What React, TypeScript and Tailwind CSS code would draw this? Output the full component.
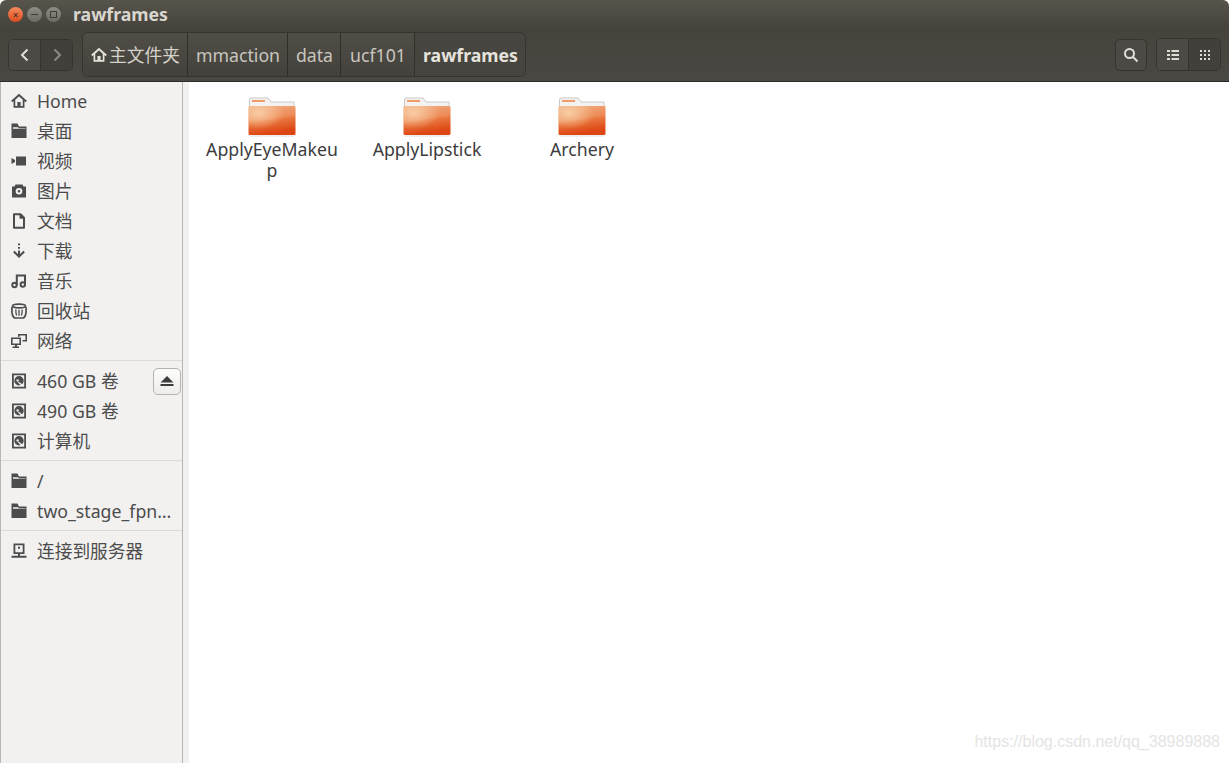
import React from "react";

const uiFont = "[font-family:'Noto_Sans','Noto_Sans_CJK_SC',sans-serif]";

const Svg = ({ children }: { children: React.ReactNode }) => (
  <svg width="16" height="16" viewBox="0 0 16 16" fill="#4c4c4c">
    {children}
  </svg>
);

const HomeIcon = ({ color = "#4c4c4c" }: { color?: string }) => (
  <svg width="16" height="16" viewBox="0 0 16 16" fill="none" stroke={color}>
    <path d="M0.8 8.6 L8 2 L15.2 8.6" strokeWidth="2" />
    <path d="M3.4 7 V13.8 H12.6 V7" strokeWidth="1.7" />
    <path d="M6.4 9 H9.6 V14 H6.4 Z" fill={color} stroke="none" />
  </svg>
);
const FolderIcon = () => (
  <Svg>
    <path d="M0.5 0.5 H6.5 L8 3.5 H15.5 V15 H0.5 Z" />
    <path d="M2 4.2 H7 L8 5.2 H14.5 V5.8 H2 Z" fill="#f2f1f0" />
  </Svg>
);
const VideoIcon = () => (
  <Svg>
    <path d="M5 3.5 H15 V12.5 H5 Z M0.5 5 L4 7 V9 L0.5 11 Z" />
  </Svg>
);
const CameraIcon = () => (
  <Svg>
    <path fillRule="evenodd" d="M4.5 1.5 H11.5 L12.5 3.5 H15 V14.5 H1 V3.5 H3.5 Z M8 5 A3.3 3.3 0 1 0 8 11.6 A3.3 3.3 0 1 0 8 5 Z M8 7 A1.3 1.3 0 1 1 8 9.6 A1.3 1.3 0 1 1 8 7 Z" />
  </Svg>
);
const DocIcon = () => (
  <svg width="16" height="16" viewBox="0 0 16 16" fill="none" stroke="#4c4c4c" strokeWidth="2">
    <path d="M3 1.2 H9.5 L13 4.8 V14.8 H3 Z M9.5 1.2 V4.8 H13" strokeLinejoin="round" />
  </svg>
);
const DownloadIcon = () => (
  <svg width="16" height="16" viewBox="0 0 16 16" fill="none" stroke="#4c4c4c" strokeWidth="2">
    <path d="M8 0.5 V2.2 M8 4 V5.7 M8 7.5 V13 M2.8 8.5 L8 13.5 L13.2 8.5" />
  </svg>
);
const MusicIcon = () => (
  <svg width="16" height="16" viewBox="0 0 16 16" fill="none" stroke="#4c4c4c" strokeWidth="2">
    <path d="M5.8 12 V2.5 H14 V11" />
    <circle cx="3.5" cy="12" r="2.2" />
    <circle cx="11.8" cy="11.5" r="2.2" />
  </svg>
);
const TrashIcon = () => (
  <svg width="16" height="16" viewBox="0 0 16 16" fill="none" stroke="#4c4c4c" strokeWidth="1.3">
    <ellipse cx="8" cy="3" rx="6.5" ry="1.9" strokeWidth="1.7" />
    <path d="M1 4 C0.5 10 1.5 15 4.5 15 H11.5 C14.5 15 15.5 10 15 4" strokeWidth="1.7" />
    <path d="M4.8 6.5 C4.8 9 5 11 5.6 12.6 M8 6.8 V12.8 M11.2 6.5 C11.2 9 11 11 10.4 12.6" />
  </svg>
);
const NetworkIcon = () => (
  <Svg>
    <path fillRule="evenodd" d="M0 4.5 H10 V12 H6 V13.5 H8 V15 H1.5 V13.5 H4 V12 H0 Z M1.6 6 V10.5 H8.4 V6 Z" />
    <path d="M7 1 H16 V8.5 H11.5 V7 H14.4 V2.5 H8.6 V3.8 H7 Z" />
  </Svg>
);
const DiskIcon = () => (
  <Svg>
    <path fillRule="evenodd" d="M1 0.5 H15 V15.5 H1 Z M2.8 2.2 V13.8 H13.2 V2.2 Z" />
    <path fillRule="evenodd" d="M8 3 A4.7 4.7 0 1 0 8 12.4 A4.7 4.7 0 1 0 8 3 Z M6.6 6.2 A1.2 1.2 0 1 1 6.6 8.6 A1.2 1.2 0 1 1 6.6 6.2 Z" />
    <path d="M7.5 8.5 L11.5 11.6 L10.4 12.8 L6.8 9.2 Z" fill="#f2f1f0" />
  </Svg>
);
const ServerIcon = () => (
  <Svg>
    <path fillRule="evenodd" d="M2.5 0.5 H13.5 V11 H9 V12.8 H15.5 V14.8 H0.5 V12.8 H7 V11 H2.5 Z M4.3 2.2 V9.3 H11.7 V2.2 Z" />
    <path d="M7 3.8 H9 V5.8 H7 Z" />
  </Svg>
);

const SidebarRow = ({ icon, label, eject }: { icon: React.ReactNode; label: string; eject?: boolean }) => (
  <div className="flex h-[30px] items-center">
    <div className="flex w-[36px] shrink-0 justify-center">{icon}</div>
    <span className="flex-1 whitespace-nowrap text-[17.7px] text-[#4c4c4c]">{label}</span>
    {eject && (
      <div className="mr-[1px] flex h-[27px] w-[28px] items-center justify-center rounded-[5px] border border-[#b5b2ac] bg-gradient-to-b from-[#fbfbfa] to-[#efeeec]">
        <svg width="16" height="16" viewBox="0 0 16 16" fill="#3c3c3c">
          <path d="M8 3 L14.5 9.5 H1.5 Z M1.5 11 H14.5 V13 H1.5 Z" />
        </svg>
      </div>
    )}
  </div>
);

const Separator = () => <div className="mb-[5px] mt-[4px] h-[1px] bg-[#dcdad7]" />;

const Crumb = ({ children, active, last }: { children: React.ReactNode; active?: boolean; last?: boolean }) => (
  <div
    className={`flex h-full items-center justify-center whitespace-nowrap pl-[1px] pt-[1px] text-[17.7px] ${last ? "" : "border-r border-[#2f2e29]"} ${
      active ? "bg-[#47453f] font-bold text-[#e6e3dd]" : "bg-gradient-to-b from-[#4f4d46] to-[#44423c] text-[#c9c6bf]"
    }`}
  >
    {children}
  </div>
);

const FolderTile = ({ name }: { name: string }) => (
  <div className="flex w-[155px] flex-col items-center pl-[3px]">
    <svg width="48" height="40" viewBox="0 0 48 40">
      <defs>
        <linearGradient id="body" x1="0" y1="0" x2="0.25" y2="1">
          <stop offset="0" stopColor="#f0a878" />
          <stop offset="0.5" stopColor="#ec824a" />
          <stop offset="1" stopColor="#dd4512" />
        </linearGradient>
        <radialGradient id="glow" cx="0.22" cy="0.25" r="0.55">
          <stop offset="0" stopColor="#fbd6ac" stopOpacity="0.8" />
          <stop offset="1" stopColor="#fbd6ac" stopOpacity="0" />
        </radialGradient>
      </defs>
      <path d="M1.5 10 V3 Q1.5 1 3 1 H20 L23 5 H46 V10 Z" fill="#f3f2f0" stroke="#cbc9c5" strokeWidth="1" />
      <path d="M4 3 H17 V5 H4 Z" fill="#ef9a68" />
      <path d="M0.5 10 Q0.5 9 2 9 H46 Q47.5 9 47.5 10 V37 Q47.5 38 46 38 H2 Q0.5 38 0.5 37 Z" fill="url(#body)" />
      <path d="M0.5 10 Q0.5 9 2 9 H46 Q47.5 9 47.5 10 V37 Q47.5 38 46 38 H2 Q0.5 38 0.5 37 Z" fill="url(#glow)" />
      <path d="M0.5 27 Q22 22 47.5 19 V10 Q47.5 9 46 9 H2 Q0.5 9 0.5 10 Z" fill="#ffffff" opacity="0.08" />
      <path d="M2 39 H46" stroke="#dddddd" strokeWidth="1" />
    </svg>
    <span className="mt-[2px] w-[135px] break-all text-center text-[17.7px] leading-[21px] text-[#3c3c3c]">{name}</span>
  </div>
);

export default function App() {
  return (
    <div className={`flex h-[763px] w-[1229px] flex-col overflow-hidden bg-white ${uiFont}`}>
      {/* title bar */}
      <div className="flex h-[28px] shrink-0 items-center rounded-t-[6px] bg-gradient-to-b from-[#57544b] to-[#45433c] pl-[8px] pt-[1px]">
        <div className="flex items-center gap-[4px]">
          <div className="flex h-[15px] w-[15px] items-center justify-center rounded-full bg-gradient-to-b from-[#f58a5c] to-[#dc4a1c] text-[10px] leading-none text-[#40291f]">×</div>
          <div className="flex h-[15px] w-[15px] items-center justify-center rounded-full bg-gradient-to-b from-[#8f8c84] to-[#6c6a63]">
            <div className="h-[1px] w-[7px] bg-[#3d3b35]" />
          </div>
          <div className="flex h-[15px] w-[15px] items-center justify-center rounded-full bg-gradient-to-b from-[#8f8c84] to-[#6c6a63]">
            <div className="h-[7px] w-[7px] border border-[#3d3b35]" />
          </div>
        </div>
        <span className="ml-[12px] text-[17.7px] font-bold text-[#d9d6cf]">rawframes</span>
      </div>

      {/* toolbar */}
      <div className="flex h-[54px] shrink-0 items-center border-b border-[#2b2a26] bg-gradient-to-b from-[#45433c] to-[#4a4842] pl-[8px] pr-[8px]">
        <div className="flex h-[32px] w-[65px] overflow-hidden rounded-[5px] border border-[#35342f]">
          <div className="flex flex-1 items-center justify-center border-r border-[#35342f] bg-[#4c4a44]">
            <svg width="16" height="16" viewBox="0 0 16 16" fill="none" stroke="#e2dfd9" strokeWidth="2"><path d="M10.5 2.5 L5 8 L10.5 13.5" /></svg>
          </div>
          <div className="flex flex-1 items-center justify-center bg-[#42403a]">
            <svg width="16" height="16" viewBox="0 0 16 16" fill="none" stroke="#8d8a83" strokeWidth="2"><path d="M5.5 2.5 L11 8 L5.5 13.5" /></svg>
          </div>
        </div>

        <div className="ml-[9px] grid h-[45px] w-[444px] grid-cols-[105px_100px_53px_74px_110px] overflow-hidden rounded-[6px] border border-[#35342f]">
          <Crumb>
            <HomeIcon color="#e6e3dd" />
            <span className="ml-[2px] text-[#d5d2cb]">主文件夹</span>
          </Crumb>
          <Crumb>mmaction</Crumb>
          <Crumb>data</Crumb>
          <Crumb>ucf101</Crumb>
          <Crumb active last>rawframes</Crumb>
        </div>

        <div className="ml-auto flex h-[32px] w-[32px] items-center justify-center rounded-[5px] border border-[#35342f] bg-[#4c4a44]">
          <svg width="16" height="16" viewBox="0 0 16 16" fill="none" stroke="#e2dfd9" strokeWidth="2"><circle cx="6.5" cy="6.5" r="4.5" /><path d="M10 10 L14.5 14.5" /></svg>
        </div>
        <div className="ml-[9px] flex h-[33px] w-[65px] overflow-hidden rounded-[5px] border border-[#35342f]">
          <div className="flex flex-1 items-center justify-center border-r border-[#35342f] bg-[#4c4a44]">
            <svg width="12" height="12" viewBox="0 0 12 12" fill="#dedbd5">
              <path d="M0 1 H3 V3 H0 Z M4.5 1 H12 V3 H4.5 Z M0 5 H3 V7 H0 Z M4.5 5 H12 V7 H4.5 Z M0 9 H3 V11 H0 Z M4.5 9 H12 V11 H4.5 Z" />
            </svg>
          </div>
          <div className="flex flex-1 items-center justify-center bg-[#42403a]">
            <svg width="12" height="12" viewBox="0 0 12 12" fill="#dedbd5">
              <path d="M1 1 H3 V3 H1 Z M5 1 H7 V3 H5 Z M9 1 H11 V3 H9 Z M1 5 H3 V7 H1 Z M5 5 H7 V7 H5 Z M9 5 H11 V7 H9 Z M1 9 H3 V11 H1 Z M5 9 H7 V11 H5 Z M9 9 H11 V11 H9 Z" />
            </svg>
          </div>
        </div>
      </div>

      <div className="flex min-h-0 flex-1">
        {/* sidebar */}
        <div className="w-[183px] shrink-0 border-l border-r border-[#b8b6b2] bg-[#f2f1f0] pt-[4px]">
          <SidebarRow icon={<HomeIcon />} label="Home" />
          <SidebarRow icon={<FolderIcon />} label="桌面" />
          <SidebarRow icon={<VideoIcon />} label="视频" />
          <SidebarRow icon={<CameraIcon />} label="图片" />
          <SidebarRow icon={<DocIcon />} label="文档" />
          <SidebarRow icon={<DownloadIcon />} label="下载" />
          <SidebarRow icon={<MusicIcon />} label="音乐" />
          <SidebarRow icon={<TrashIcon />} label="回收站" />
          <SidebarRow icon={<NetworkIcon />} label="网络" />
          <Separator />
          <SidebarRow icon={<DiskIcon />} label="460 GB 卷" eject />
          <SidebarRow icon={<DiskIcon />} label="490 GB 卷" />
          <SidebarRow icon={<DiskIcon />} label="计算机" />
          <Separator />
          <SidebarRow icon={<FolderIcon />} label="/" />
          <SidebarRow icon={<FolderIcon />} label="two_stage_fpn…" />
          <Separator />
          <SidebarRow icon={<ServerIcon />} label="连接到服务器" />
        </div>
        <div className="w-[6px] shrink-0 bg-[#f2f1f0]" />

        {/* file grid */}
        <div className="relative flex-1 bg-white pl-[4px] pt-[15px]">
          <div className="flex items-start">
            <FolderTile name="ApplyEyeMakeup" />
            <FolderTile name="ApplyLipstick" />
            <FolderTile name="Archery" />
          </div>
          <span className="absolute bottom-[9px] right-[9px] font-['Liberation_Sans',sans-serif] text-[16px] text-[#e4e4e4]">https://blog.csdn.net/qq_38989888</span>
        </div>
      </div>
    </div>
  );
}
